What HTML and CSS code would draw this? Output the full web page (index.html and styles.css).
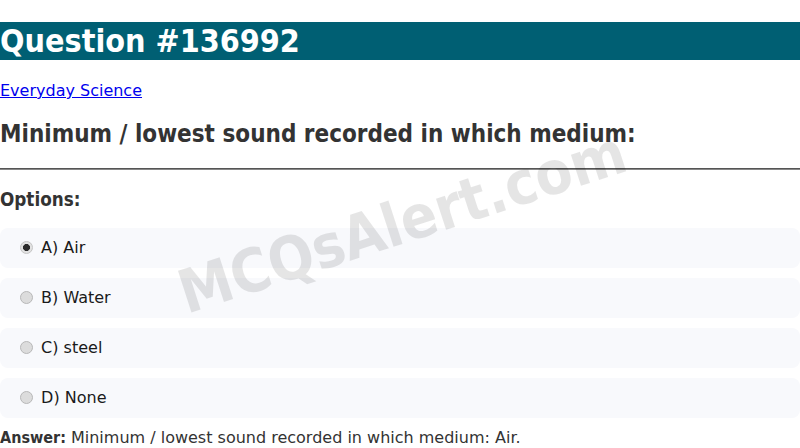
FILE: index.html
```
<!DOCTYPE html>
<html>
<head>
<meta charset="utf-8">
<link rel="stylesheet" href="styles.css">
</head>
<body>
<h1 class="title">Question #136992</h1>
<p class="cat"><a href="#">Everyday Science</a></p>
<h2 class="question">Minimum / lowest sound recorded in which medium:</h2>
<hr class="rule">
<h3 class="opts-title">Options:</h3>
<div class="options">
  <label class="option"><input type="radio" name="q" checked disabled> A) Air</label>
  <label class="option"><input type="radio" name="q" disabled> B) Water</label>
  <label class="option"><input type="radio" name="q" disabled> C) steel</label>
  <label class="option"><input type="radio" name="q" disabled> D) None</label>
</div>
<p class="answer"><strong>Answer:</strong> Minimum / lowest sound recorded in which medium: Air.</p>
<div class="watermark">MCQsAlert.com</div>
</body>
</html>
```
FILE: styles.css
```
html, body {
  margin: 0;
  padding: 0;
  background: #fff;
}
body {
  font-family: "DejaVu Sans", sans-serif;
  color: #333;
  position: relative;
  overflow: hidden;
}
.title, .question, .opts-title, .answer strong, .watermark {
  font-family: "DejaVu Sans Condensed", "DejaVu Sans", sans-serif;
  font-stretch: condensed;
}
.title {
  font-size: 32px;
  margin: 22px 0 21px;
  background: #005f73;
  color: #fff;
  font-weight: bold;
}
.cat {
  margin: 16px 0;
  font-size: 16px;
}
.cat a {
  color: #0000ee;
}
.question {
  font-size: 24px;
  margin: 20px 0;
  color: #333;
}
.rule {
  margin: 8px 0;
  border: none;
  border-top: 1px solid #555;
  border-bottom: 1px solid #888;
  height: 0;
}
.opts-title {
  font-size: 18.72px;
  margin: 18.72px 0;
  color: #333;
}
.options {
  display: flex;
  flex-direction: column;
  gap: 10px;
}
.option {
  display: block;
  background: #f8f9fc;
  border-radius: 8px;
  padding: 10px 15px;
  font-size: 16px;
  line-height: 20px;
  color: #1a1a1a;
}
.option input {
  appearance: none;
  -webkit-appearance: none;
  width: 13px;
  height: 13px;
  box-sizing: border-box;
  border-radius: 50%;
  border: 1px solid #b8b8b8;
  background: #dcdcdc;
  margin: 3px 3px 0 5px;
  vertical-align: top;
}
.option input:checked {
  background: radial-gradient(circle, #2b2b2b 0 3.2px, #e2e2e2 3.8px);
  border-color: #c4c4c4;
}
.answer {
  margin: 10px 0;
  font-size: 16px;
  color: #333;
}
.answer strong {
  font-weight: bold;
}
.watermark {
  position: absolute;
  left: 402px;
  top: 222px;
  transform: translate(-50%, -50%) rotate(-18deg);
  font-size: 60px;
  font-weight: bold;
  color: rgba(0, 0, 0, 0.1);
  white-space: nowrap;
  pointer-events: none;
}
```
